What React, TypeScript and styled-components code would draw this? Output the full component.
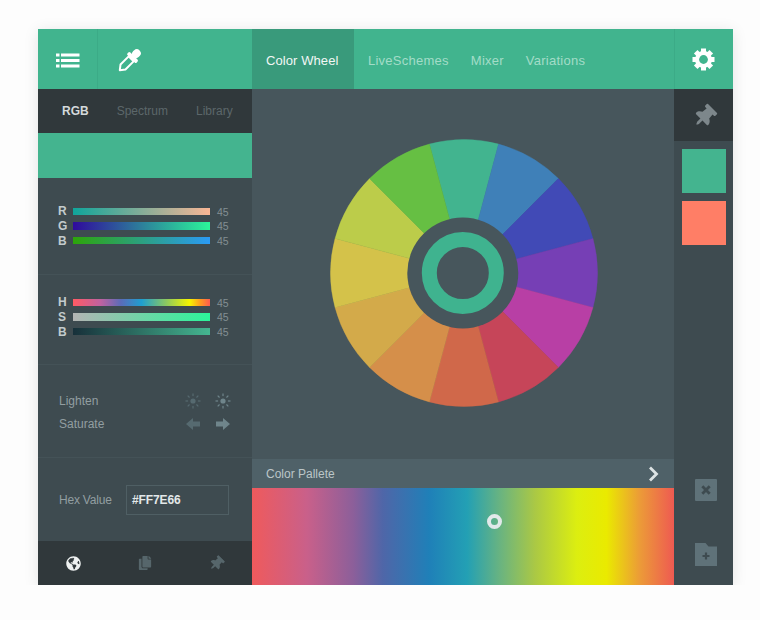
import styled, { createGlobalStyle } from "styled-components";
import { FaCopy, FaGlobeAmericas, FaThumbtack } from "react-icons/fa";

const WHEEL_COLORS = [
  "#42b48f",
  "#3f80b8",
  "#414ab6",
  "#763fb5",
  "#b83fa5",
  "#c64559",
  "#d0684a",
  "#d58f4a",
  "#d3aa4a",
  "#d4c24a",
  "#bccc4a",
  "#66bf43",
];

const RGB_ROWS = [
  { label: "R", gradient: "#0fa59b, #f9b695" },
  { label: "G", gradient: "#2f0a9c, #2bf59a" },
  { label: "B", gradient: "#2da50a, #2b9bf5" },
];

const HSB_ROWS = [
  {
    label: "H",
    gradient:
      "#ff5a64 0%, #c062a0 20%, #5a6cb8 35%, #1f9fd0 50%, #8cc860 68%, #f5f500 85%, #ff9a20 93%, #ff5a50 100%",
  },
  { label: "S", gradient: "#b4b4b4, #2bf59a" },
  { label: "B", gradient: "#17303a, #45b690" },
];

const GEAR_TEETH = [0, 45, 90, 135, 180, 225, 270, 315];

function wedgePath(index: number) {
  const center = 134;
  const radius = 133.5;
  const start = ((index * 30 - 15 - 90) * Math.PI) / 180;
  const end = ((index * 30 + 15 - 90) * Math.PI) / 180;
  const x1 = center + radius * Math.cos(start);
  const y1 = center + radius * Math.sin(start);
  const x2 = center + radius * Math.cos(end);
  const y2 = center + radius * Math.sin(end);
  return `M${center} ${center}L${x1} ${y1}A${radius} ${radius} 0 0 1 ${x2} ${y2}Z`;
}

function ColorWheel() {
  return (
    <svg width="268" height="268" viewBox="0 0 268 268">
      {WHEEL_COLORS.map((color, i) => (
        <path key={color} d={wedgePath(i)} fill={color} stroke={color} strokeWidth="0.4" />
      ))}
      <circle cx="132.8" cy="134" r="55.5" fill="#47565c" />
      <circle cx="132.8" cy="134" r="33.5" fill="none" stroke="#3fb38f" strokeWidth="15" />
    </svg>
  );
}

function ListIcon() {
  return (
    <svg width="24" height="15" viewBox="0 0 24 15" fill="#fff">
      <rect x="0" y="0.5" width="3.5" height="3" />
      <rect x="5" y="0.5" width="18.5" height="3" />
      <rect x="0" y="6" width="3.5" height="3" />
      <rect x="5" y="6" width="18.5" height="3" />
      <rect x="0" y="11.5" width="3.5" height="3" />
      <rect x="5" y="11.5" width="18.5" height="3" />
    </svg>
  );
}

function DropperIcon() {
  return (
    <svg width="26" height="26" viewBox="0 0 26 26">
      <g transform="rotate(45 13 13)">
        <rect x="9" y="-2" width="8" height="9" rx="4" fill="#fff" />
        <rect x="6.5" y="6" width="13" height="4" rx="1.5" fill="#fff" />
        <path
          d="M9.5 10H16.5V21.5L13 26L9.5 21.5Z"
          fill="#41b48e"
          stroke="#fff"
          strokeWidth="2"
          strokeLinejoin="round"
        />
      </g>
    </svg>
  );
}

function GearIcon() {
  return (
    <svg width="23" height="23" viewBox="0 0 23 23" fill="#fff">
      <circle cx="11.5" cy="11.5" r="8.5" />
      {GEAR_TEETH.map((angle) => (
        <rect key={angle} x="9" y="0.5" width="5" height="5" transform={`rotate(${angle} 11.5 11.5)`} />
      ))}
      <circle cx="11.5" cy="11.5" r="4.4" fill="#41b48e" />
    </svg>
  );
}

function SunIcon() {
  const rays = [0, 45, 90, 135, 180, 225, 270, 315];
  return (
    <svg width="16" height="16" viewBox="0 0 16 16" fill="currentColor">
      <circle cx="8" cy="8" r="2.6" />
      {rays.map((angle) => (
        <rect key={angle} x="7.4" y="0.5" width="1.2" height="2.6" transform={`rotate(${angle} 8 8)`} />
      ))}
    </svg>
  );
}

function ArrowIcon({ left }: { left?: boolean }) {
  return (
    <svg width="16" height="14" viewBox="0 0 16 14" fill="currentColor">
      <path d={left ? "M1 7L8 1V4.5H15V9.5H8V13Z" : "M15 7L8 1V4.5H1V9.5H8V13Z"} />
    </svg>
  );
}

function CloseBoxIcon() {
  return (
    <svg width="22" height="22" viewBox="0 0 22 22">
      <rect width="22" height="22" rx="1" fill="#5f7279" />
      <path d="M7.3 7.3l7.4 7.4M14.7 7.3l-7.4 7.4" stroke="#3e4b50" strokeWidth="2.8" />
    </svg>
  );
}

function FolderPlusIcon() {
  return (
    <svg width="22" height="23" viewBox="0 0 22 23">
      <path d="M0 0H10.5L13.5 3.5H22V23H0Z" fill="#5f7279" />
      <path d="M11 9.5v7M7.5 13h7" stroke="#3e4b50" strokeWidth="2.2" />
    </svg>
  );
}

function ChevronIcon() {
  return (
    <svg width="11" height="16" viewBox="0 0 11 16">
      <path d="M2 1.5L8.5 8 2 14.5" fill="none" stroke="#dde3e4" strokeWidth="2.8" />
    </svg>
  );
}

function SliderGroup({ rows }: { rows: { label: string; gradient: string }[] }) {
  return (
    <Sliders>
      {rows.map((row) => (
        <SliderRow key={row.label}>
          <SliderLabel>{row.label}</SliderLabel>
          <SliderBar $gradient={row.gradient} />
          <SliderValue>45</SliderValue>
        </SliderRow>
      ))}
    </Sliders>
  );
}

export default function App() {
  return (
    <>
      <GlobalStyle />
      <Window>
        <Header>
          <ToolGroup>
            <MenuButton>
              <ListIcon />
            </MenuButton>
            <DropperButton>
              <DropperIcon />
            </DropperButton>
          </ToolGroup>
          <ActiveTab>Color Wheel</ActiveTab>
          <TabLinks>
            <TabLink>LiveSchemes</TabLink>
            <TabLink>Mixer</TabLink>
            <TabLink>Variations</TabLink>
          </TabLinks>
          <SettingsButton>
            <GearIcon />
          </SettingsButton>
        </Header>
        <Body>
          <LeftPanel>
            <ModeTabs>
              <ModeTab $active>RGB</ModeTab>
              <ModeTab>Spectrum</ModeTab>
              <ModeTab>Library</ModeTab>
            </ModeTabs>
            <CurrentColor />
            <RgbSection>
              <SliderGroup rows={RGB_ROWS} />
            </RgbSection>
            <HsbSection>
              <SliderGroup rows={HSB_ROWS} />
            </HsbSection>
            <AdjustSection>
              <AdjustRow>
                <AdjustLabel>Lighten</AdjustLabel>
                <AdjustIcon $dim>
                  <SunIcon />
                </AdjustIcon>
                <AdjustIcon>
                  <SunIcon />
                </AdjustIcon>
              </AdjustRow>
              <AdjustRow>
                <AdjustLabel>Saturate</AdjustLabel>
                <AdjustIcon $dim>
                  <ArrowIcon left />
                </AdjustIcon>
                <AdjustIcon>
                  <ArrowIcon />
                </AdjustIcon>
              </AdjustRow>
            </AdjustSection>
            <HexSection>
              <HexLabel>Hex Value</HexLabel>
              <HexField>#FF7E66</HexField>
            </HexSection>
            <Footer>
              <FooterButton $active>
                <FaGlobeAmericas size={15} />
              </FooterButton>
              <FooterButton>
                <FaCopy size={14} />
              </FooterButton>
              <FooterButton>
                <PinIcon size={15} />
              </FooterButton>
            </Footer>
          </LeftPanel>
          <Center>
            <WheelArea>
              <ColorWheel />
            </WheelArea>
            <PaletteBar>
              Color Pallete
              <ChevronIcon />
            </PaletteBar>
            <Spectrum>
              <Marker />
            </Spectrum>
          </Center>
          <RightPanel>
            <PinBox>
              <PinIcon size={23} />
            </PinBox>
            <Swatch $color="#44b48f" />
            <Swatch $color="#ff7e66" />
            <RightActions>
              <CloseBoxIcon />
              <FolderPlusIcon />
            </RightActions>
          </RightPanel>
        </Body>
      </Window>
    </>
  );
}

const GlobalStyle = createGlobalStyle`
  html, body {
    margin: 0;
    background: #fdfdfd;
  }
  body {
    font-family: "Liberation Sans", Arial, sans-serif;
  }
`;

const Window = styled.div`
  width: 695px;
  height: 556px;
  margin: 29px 0 0 38px;
  display: flex;
  flex-direction: column;
  box-shadow: 0 2px 14px rgba(0, 0, 0, 0.1);
`;

const Header = styled.header`
  height: 60px;
  flex: none;
  display: flex;
  background: #41b48e;
`;

const ToolGroup = styled.div`
  width: 214px;
  display: flex;
`;

const MenuButton = styled.div`
  width: 60px;
  padding-top: 3px;
  box-sizing: border-box;
  display: flex;
  align-items: center;
  justify-content: center;
  border-right: 1px solid #3cab87;
`;

const DropperButton = styled.div`
  margin-left: 18px;
  padding-top: 3px;
  display: flex;
  align-items: center;
`;

const ActiveTab = styled.div`
  width: 102px;
  padding: 3px 0 0 14px;
  box-sizing: border-box;
  display: flex;
  align-items: center;
  background: #399a7b;
  color: #f2f7f5;
  font-size: 13px;
  letter-spacing: 0.08px;
`;

const TabLinks = styled.div`
  flex: 1;
  display: flex;
  align-items: center;
  gap: 22px;
  padding: 3px 0 0 14px;
`;

const TabLink = styled.div`
  color: #a3dcc8;
  font-size: 13px;
  letter-spacing: 0.25px;
`;

const SettingsButton = styled.div`
  width: 59px;
  padding-right: 2px;
  display: flex;
  align-items: center;
  justify-content: center;
  border-left: 1px solid #3cab87;
  box-sizing: border-box;
`;

const Body = styled.div`
  flex: 1;
  min-height: 0;
  display: flex;
`;

const LeftPanel = styled.aside`
  width: 214px;
  flex: none;
  display: flex;
  flex-direction: column;
  background: #3e4b50;
`;

const ModeTabs = styled.div`
  height: 44px;
  flex: none;
  padding-left: 24px;
  display: flex;
  align-items: center;
  gap: 28px;
  background: #30383b;
`;

const ModeTab = styled.div<{ $active?: boolean }>`
  font-size: 12px;
  font-weight: ${(p) => (p.$active ? 700 : 400)};
  color: ${(p) => (p.$active ? "#d5dadb" : "#5c676a")};
`;

const CurrentColor = styled.div`
  height: 45px;
  flex: none;
  background: #44b48f;
`;

const RgbSection = styled.section`
  height: 97px;
  flex: none;
  box-sizing: border-box;
  padding-top: 26px;
  border-bottom: 1px solid #445257;
`;

const HsbSection = styled(RgbSection)`
  height: 90px;
  padding-top: 20px;
`;

const Sliders = styled.div`
  display: flex;
  flex-direction: column;
  padding-left: 20px;
`;

const SliderRow = styled.div`
  height: 14.67px;
  display: flex;
  align-items: center;
`;

const SliderLabel = styled.span`
  width: 15px;
  font-size: 12px;
  font-weight: 700;
  color: #c3cbcd;
`;

const SliderBar = styled.div<{ $gradient: string }>`
  width: 137px;
  height: 7.5px;
  background: linear-gradient(to right, ${(p) => p.$gradient});
`;

const SliderValue = styled.span`
  margin-left: 7px;
  padding-top: 1px;
  font-size: 10.5px;
  color: #838f93;
`;

const AdjustSection = styled.section`
  height: 93px;
  flex: none;
  box-sizing: border-box;
  padding: 24px 0 0 21px;
  border-bottom: 1px solid #445257;
`;

const AdjustRow = styled.div`
  height: 23px;
  display: flex;
  align-items: center;
`;

const AdjustLabel = styled.span`
  width: 126px;
  font-size: 12px;
  color: #929ea1;
`;

const AdjustIcon = styled.span<{ $dim?: boolean }>`
  width: 16px;
  margin-right: 14px;
  display: flex;
  color: ${(p) => (p.$dim ? "#566a70" : "#6f858b")};
`;

const HexSection = styled.section`
  flex: 1;
  display: flex;
  align-items: center;
  padding-left: 21px;
`;

const HexLabel = styled.span`
  width: 67px;
  font-size: 12px;
  letter-spacing: -0.2px;
  color: #929ea1;
`;

const HexField = styled.div`
  width: 103px;
  height: 30px;
  box-sizing: border-box;
  padding-left: 5px;
  display: flex;
  align-items: center;
  border: 1px solid #4f5f64;
  font-size: 12px;
  font-weight: 700;
  letter-spacing: -0.1px;
  color: #e3e8e9;
`;

const Footer = styled.footer`
  height: 44px;
  flex: none;
  display: grid;
  grid-template-columns: repeat(3, 1fr);
  align-items: center;
  justify-items: center;
  background: #30383b;
`;

const FooterButton = styled.div<{ $active?: boolean }>`
  display: flex;
  color: ${(p) => (p.$active ? "#eef1f1" : "#56666b")};
`;

const PinIcon = styled(FaThumbtack)`
  transform: rotate(45deg);
`;

const Center = styled.main`
  flex: 1;
  min-width: 0;
  display: flex;
  flex-direction: column;
  background: #47565c;
`;

const WheelArea = styled.div`
  height: 370px;
  flex: none;
  box-sizing: border-box;
  padding: 0 0 3px 1px;
  display: flex;
  align-items: center;
  justify-content: center;
`;

const PaletteBar = styled.div`
  height: 29px;
  flex: none;
  padding: 0 15px 0 14px;
  display: flex;
  align-items: center;
  justify-content: space-between;
  background: #4f6168;
  color: #bcc6c8;
  font-size: 12px;
`;

const Spectrum = styled.div`
  flex: 1;
  position: relative;
  background: linear-gradient(
    to right,
    #ef5a5c 0%,
    #c9608a 13%,
    #8c5f9a 24%,
    #4f66a8 31%,
    #1f80b8 42%,
    #23a0b4 51%,
    #6bb47f 59%,
    #aac845 67%,
    #dcee10 77%,
    #eaea00 84%,
    #ec9a38 92%,
    #ee5a52 100%
  );
`;

const Marker = styled.div`
  position: absolute;
  left: 235px;
  top: 26px;
  width: 15px;
  height: 15px;
  box-sizing: border-box;
  border: 4px solid #e2e9ea;
  border-radius: 50%;
`;

const RightPanel = styled.aside`
  width: 59px;
  flex: none;
  display: flex;
  flex-direction: column;
  align-items: center;
  background: #3e4b50;
`;

const PinBox = styled.div`
  width: 100%;
  height: 52px;
  flex: none;
  padding: 3px 0 0 2px;
  box-sizing: border-box;
  display: flex;
  align-items: center;
  justify-content: center;
  background: #30383b;
  color: #7d878b;
`;

const Swatch = styled.div<{ $color: string }>`
  width: 44px;
  height: 44px;
  flex: none;
  margin-top: 8px;
  background: ${(p) => p.$color};
`;

const RightActions = styled.div`
  margin-top: 234px;
  padding-left: 5px;
  display: flex;
  flex-direction: column;
  align-items: center;
  gap: 42px;
`;
